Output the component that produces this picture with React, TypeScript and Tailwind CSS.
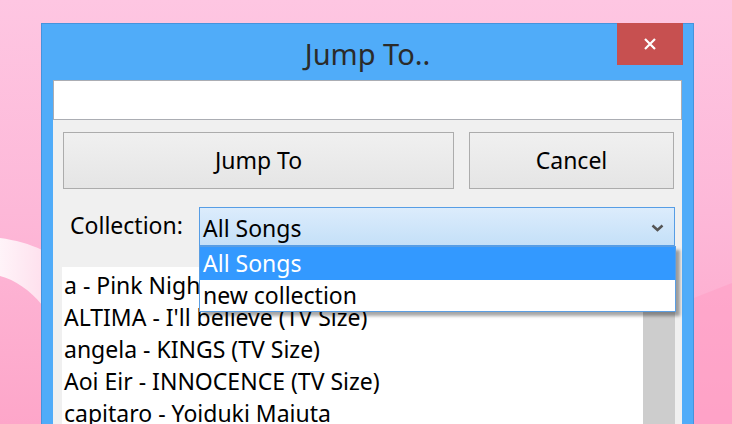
import React from "react";

const font = { fontFamily: '"Noto Sans", "Open Sans", sans-serif' };

export default function App() {
  const songs = [
    "a - Pink Night Fairytale",
    "ALTIMA - I'll believe (TV Size)",
    "angela - KINGS (TV Size)",
    "Aoi Eir - INNOCENCE (TV Size)",
    "capitaro - Yoiduki Maiuta",
  ];
  return (
    <div
      className="relative w-[732px] h-[424px] overflow-hidden bg-gradient-to-b from-[#fec6e2] via-[#fdb8d8] to-[#fda6c9]"
      style={font}
    >
      <svg className="absolute inset-0" width="732" height="424" viewBox="0 0 732 424">
        <defs>
          <linearGradient id="sw" x1="0" y1="0" x2="1" y2="0">
            <stop offset="0" stopColor="#ffffff" stopOpacity="0.85" />
            <stop offset="1" stopColor="#ffffff" stopOpacity="0.6" />
          </linearGradient>
        </defs>
        <path d="M0 238 C 15 240, 30 244, 42 250 L 42 305 C 30 290, 15 280, 0 276 Z" fill="url(#sw)" />
        <path d="M694 298 L732 283 L732 424 L694 424 Z" fill="#ff9fc4" opacity="0.55" />
      </svg>
      <div className="relative pl-[41px] pt-[23px]">
        <div className="w-[653px] h-[420px] border border-[#4593dd] bg-[#50acf9] flex flex-col">
          <div className="relative h-[56px] shrink-0 flex items-center justify-center">
            <span className="text-[29px] text-[#2b2b2b] leading-none mt-[3px]">Jump To..</span>
            <div className="absolute right-[10px] top-[-1px] w-[66px] h-[42px] bg-[#c75050] flex items-center justify-center">
              <svg width="14" height="12" viewBox="0 0 14 12">
                <path d="M2 1 L12 11 M12 1 L2 11" stroke="#ffffff" strokeWidth="2.2" fill="none" />
              </svg>
            </div>
          </div>
          <div className="mx-[11px] flex-1 bg-[#f0f0f0] flex flex-col">
            <div className="h-[40px] shrink-0 bg-white border border-[#abadb3]" />
            <div className="flex shrink-0 gap-[15px] pl-[10px] pr-[8px] mt-[12px]">
              <div className="w-[391px] h-[57px] border border-[#acacac] bg-gradient-to-b from-[#f0f0f0] to-[#e5e5e5] flex items-center justify-center text-[23px] text-black">
                Jump To
              </div>
              <div className="w-[205px] h-[57px] border border-[#acacac] bg-gradient-to-b from-[#f0f0f0] to-[#e5e5e5] flex items-center justify-center text-[23px] text-black">
                Cancel
              </div>
            </div>
            <div className="relative shrink-0 flex items-start mt-[18px] pl-[17px]">
              <div className="w-[129px] text-[23px] text-black leading-[32px] mt-[2px]">Collection:</div>
              <div className="relative w-[476px] h-[39px] border border-[#569de5] bg-gradient-to-b from-[#dcecfc] to-[#c4e0f8] flex items-center pl-[3px] text-[23px] text-black">
                <span className="mt-[3px]">All Songs</span>
                <svg className="absolute right-[10px] top-[16px]" width="13" height="8" viewBox="0 0 13 8">
                  <path d="M1.5 1.5 L6.5 6 L11.5 1.5" stroke="#555555" strokeWidth="2.5" fill="none" />
                </svg>
                <div className="absolute left-[-1px] top-[38px] w-[477px] h-[66px] border border-[#5a9ee3] bg-white shadow-[4px_4px_3px_rgba(0,0,0,0.35)] z-10 flex flex-col">
                  <div className="h-[33px] bg-[#3399ff] text-white pl-[3px] flex items-center">All Songs</div>
                  <div className="h-[31px] bg-white text-black pl-[3px] flex items-center">new collection</div>
                </div>
              </div>
            </div>
            <div className="flex mt-[21px] ml-[9px] mr-[7px] flex-1 min-h-0">
              <div className="flex-1 bg-white pl-[2px] pt-[2px] overflow-hidden">
                {songs.map((s) => (
                  <div key={s} className="h-[32px] leading-[32px] text-[23px] text-black whitespace-nowrap">
                    {s}
                  </div>
                ))}
              </div>
              <div className="w-[32px] bg-[#cdcdcd]" />
            </div>
          </div>
        </div>
      </div>
    </div>
  );
}
